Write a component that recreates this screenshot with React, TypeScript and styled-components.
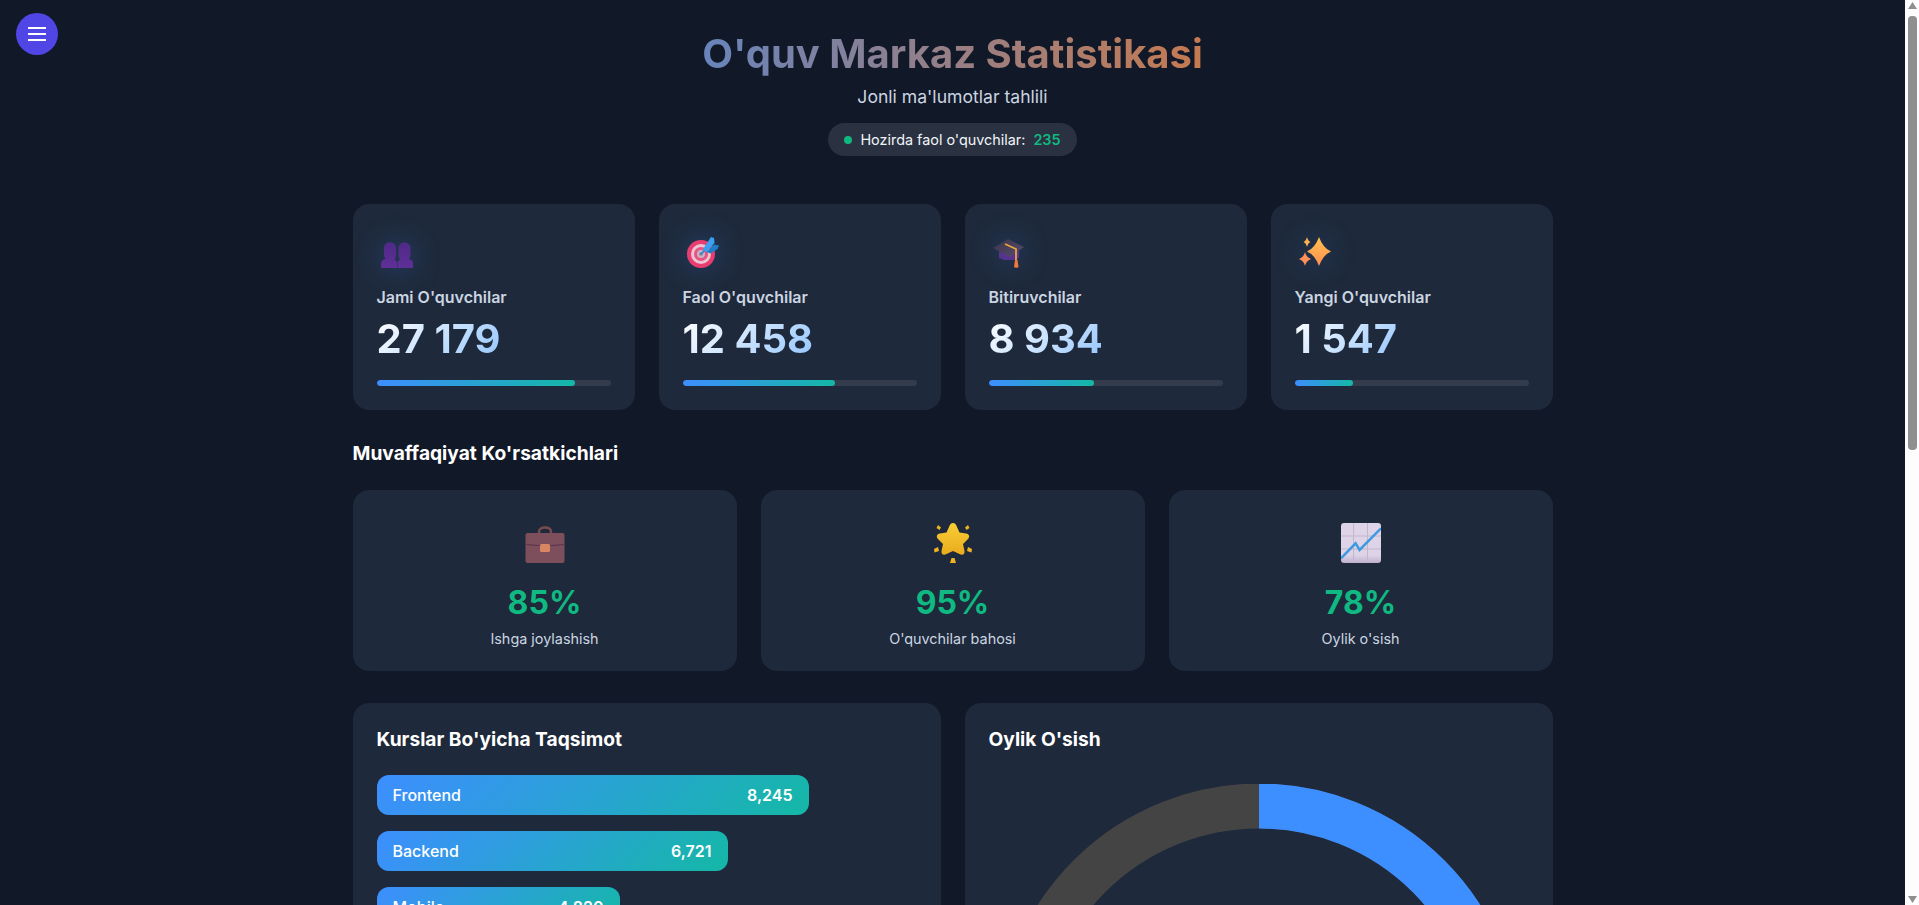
import React from "react";
import styled, { createGlobalStyle } from "styled-components";

const GlobalStyle = createGlobalStyle`
  html {
    background: #111827;
  }
  body {
    margin: 0;
    background: #111827;
    color: #ffffff;
    font-family: "Inter", "Noto Sans", sans-serif;
  }
`;

const ScrollTrack = styled.div`
  position: fixed;
  top: 0;
  right: 0;
  bottom: 0;
  width: 14px;
  background: #fdfdfd;
  display: flex;
  flex-direction: column;
  justify-content: space-between;
`;

const ScrollArrow = styled.svg`
  display: block;
  width: 9px;
  height: 7px;
  margin: 2px 2px 2px 3px;
`;

const ScrollThumb = styled.div`
  position: absolute;
  top: 16px;
  left: 3px;
  width: 9px;
  height: 434px;
  border-radius: 4px;
  background: #8f8f8f;
`;

const MenuButton = styled.button`
  position: fixed;
  top: 13px;
  left: 16px;
  width: 42px;
  height: 42px;
  padding: 0;
  border: none;
  border-radius: 50%;
  background: #4f46e5;
  display: flex;
  flex-direction: column;
  align-items: center;
  justify-content: center;
  gap: 4px;
`;

const MenuLine = styled.span`
  display: block;
  width: 18px;
  height: 2px;
  background: #ffffff;
`;

const Page = styled.div`
  min-height: 1824px;
  padding-right: 14px;
`;

const Container = styled.main`
  width: 1200px;
  margin: 0 auto;
`;

const Header = styled.header`
  padding-top: 30px;
  display: flex;
  flex-direction: column;
  align-items: center;
  margin-bottom: 48px;
`;

const Title = styled.h1`
  margin: 0;
  font-size: 40px;
  line-height: 48px;
  font-weight: 700;
  background: linear-gradient(90deg, #6884bb, #c67a50);
  -webkit-background-clip: text;
  background-clip: text;
  color: transparent;
`;

const Subtitle = styled.p`
  margin: 8px 0 0;
  font-size: 17.6px;
  line-height: 21px;
  color: #cbd5e1;
`;

const LiveBadge = styled.div`
  margin-top: 16px;
  height: 33px;
  padding: 0 16px;
  border-radius: 17px;
  background: #2a3140;
  display: flex;
  align-items: center;
  font-size: 14.4px;
  color: #f1f5f9;
`;

const LiveDot = styled.span`
  width: 8px;
  height: 8px;
  border-radius: 50%;
  background: #10b981;
  margin-right: 8px;
`;

const LiveCount = styled.span`
  margin-left: 8px;
  color: #10b981;
  font-weight: 600;
`;

const StatGrid = styled.section`
  display: grid;
  grid-template-columns: repeat(4, 1fr);
  gap: 24px;
`;

const Card = styled.div`
  background: #1e293b;
  border-radius: 16px;
  padding: 24px;
`;

const StatIcon = styled.div`
  height: 48px;
  display: flex;
  align-items: center;
  padding-left: 4px;
  margin-bottom: 12px;

  svg {
    filter: drop-shadow(0 0 14px rgba(61, 142, 255, 0.3));
  }
`;

const StatLabel = styled.div`
  font-size: 16px;
  line-height: 18px;
  font-weight: 600;
  color: #cbd5e1;
`;

const StatValue = styled.div`
  margin-top: 9px;
  font-size: 40px;
  line-height: 48px;
  font-weight: 700;
  width: fit-content;
  background: linear-gradient(135deg, #ffffff, #93c5fd);
  -webkit-background-clip: text;
  background-clip: text;
  color: transparent;
`;

const Progress = styled.div`
  margin-top: 17px;
  height: 6px;
  border-radius: 3px;
  background: #323c4c;
  overflow: hidden;
`;

const ProgressFill = styled.div<{ $width: number }>`
  width: ${p => p.$width}%;
  height: 100%;
  border-radius: 3px;
  background: linear-gradient(90deg, #3d8eff, #14b8a6);
`;

const SectionTitle = styled.h2`
  margin: 31px 0 25px;
  font-size: 19.2px;
  line-height: 24px;
  font-weight: 700;
  color: #ffffff;
`;

const SuccessGrid = styled.section`
  display: grid;
  grid-template-columns: repeat(3, 1fr);
  gap: 24px;
`;

const SuccessCard = styled(Card)`
  padding: 33px 24px 22px;
  display: flex;
  flex-direction: column;
  align-items: center;
`;

const SuccessValue = styled.div`
  margin-top: 21px;
  font-size: 32px;
  line-height: 38px;
  font-weight: 700;
  color: #10b981;
`;

const SuccessLabel = styled.div`
  margin-top: 7px;
  font-size: 14.4px;
  line-height: 20px;
  color: #cbd5e1;
`;

const ChartGrid = styled.section`
  margin-top: 32px;
  display: grid;
  grid-template-columns: repeat(2, 1fr);
  gap: 24px;
`;

const ChartTitle = styled.h3`
  margin: 0 0 24px;
  font-size: 19.2px;
  line-height: 24px;
  font-weight: 700;
  color: #ffffff;
`;

const CourseList = styled.div`
  display: flex;
  flex-direction: column;
  gap: 16px;
`;

const CourseBar = styled.div<{ $width: number }>`
  width: ${p => p.$width}%;
  height: 40px;
  box-sizing: border-box;
  padding: 0 16px;
  border-radius: 12px;
  background: linear-gradient(135deg, #3d8eff, #14b8a6);
  display: flex;
  align-items: center;
  justify-content: space-between;
  font-size: 16px;
  font-weight: 500;
  color: #ffffff;
`;

const CourseCount = styled.span`
  font-weight: 600;
`;

const DonutSvg = styled.svg`
  display: block;
  width: 540px;
  height: 540px;
  margin-top: 33px;
`;

const Busts = () => (
  <svg width="32" height="32" viewBox="0 0 32 32">
    <defs>
      <linearGradient id="bust" x1="0" y1="0" x2="0" y2="1">
        <stop offset="0" stopColor="#4f2a86" />
        <stop offset="1" stopColor="#5f2f98" />
      </linearGradient>
    </defs>
    <path d="M17.500 12c0-3.500 2.500-5.500 6-5.500s6 2 6 5.500v6c0 2-.5 3.500-1.500 5 2.500.5 4 2 4 4.500V32H16.500v-5c0-1.500 1-2.800 2.500-3.500-1-1.500-1.500-3.500-1.500-5.500z" fill="url(#bust)" />
    <path d="M3 12c0-3.500 2.500-5.500 6-5.500s6 2 6 5.500v6c0 2-.5 4-1.500 5.500 1.500.7 2.500 2 2.500 3.500v5H0v-4.500C0 25 1.500 23.500 4.500 23 3.500 21.500 3 20 3 18z" fill="url(#bust)" />
  </svg>
);

const Target = () => (
  <svg width="32" height="32" viewBox="0 0 32 32">
    <circle cx="14" cy="18" r="14" fill="#ea3d6f" />
    <circle cx="14" cy="18" r="10" fill="#e8c6d6" />
    <circle cx="14" cy="18" r="7" fill="#e8537f" />
    <circle cx="14" cy="18" r="4" fill="#c8b4c4" />
    <circle cx="14" cy="18" r="1.800" fill="#8d7a92" />
    <path d="M14 18 24 8" stroke="#2f8fdc" strokeWidth="2" />
    <path d="M16 13 24 1l3 1 .5 5-8 9z" fill="#38a2f0" />
    <path d="M19.500 16 27 8.500l5 1-1.500 3.500-7 4.500z" fill="#1f7cc8" />
  </svg>
);

const GradCap = () => (
  <svg width="32" height="32" viewBox="0 0 32 32">
    <defs>
      <linearGradient id="cap" x1="0" y1="0" x2="1" y2="1">
        <stop offset="0" stopColor="#3a3448" />
        <stop offset="1" stopColor="#574c70" />
      </linearGradient>
    </defs>
    <path d="M6 15v7l5 2h10l5-2v-7z" fill="#55338f" />
    <path d="M0 12 15 3l16 8-14 10z" fill="url(#cap)" />
    <path d="M12 8l11 5v11" fill="none" stroke="#eaa63e" strokeWidth="1.800" />
    <path d="M22 24h2.500l1 7c-.5 1-3.500 1-4.500 0z" fill="#f0783c" />
  </svg>
);

const Sparkles = () => (
  <svg width="32" height="32" viewBox="0 0 32 32">
    <defs>
      <linearGradient id="spark" x1="0" y1="0" x2="0" y2="1">
        <stop offset="0" stopColor="#ffc24e" />
        <stop offset="1" stopColor="#ff8f52" />
      </linearGradient>
    </defs>
    <path d="M20 1Q24 12 32 15.500 24 19 20 30 16 19 8 15.500 16 12 20 1z" fill="url(#spark)" />
    <path d="M8 1Q9 5 11.500 6 9 7 8 11 7 7 4.500 6 7 5 8 1z" fill="#ffb050" />
    <path d="M6 16Q7 21 12 23 7 25 6 30 5 25 0 23 5 21 6 16z" fill="#ff9058" />
  </svg>
);

const Briefcase = () => (
  <svg width="40" height="40" viewBox="0 0 40 40">
    <path d="M14 11V9c0-3 2.500-4.500 6-4.500S26 6 26 9v2" fill="none" stroke="#794b4f" strokeWidth="2.400" />
    <rect x="0.500" y="10" width="39" height="30" rx="2" fill="#7d4e5c" />
    <path d="M0.500 21c6 2 33 2 39 0" fill="none" stroke="#5e3550" strokeWidth="1.200" />
    <rect x="15" y="21" width="10" height="8" rx="1.500" fill="#d98663" />
  </svg>
);

const StarBurst = () => (
  <svg width="40" height="40" viewBox="0 0 40 40">
    <defs>
      <linearGradient id="star" x1="0" y1="0" x2="0" y2="1">
        <stop offset="0" stopColor="#f8ce34" />
        <stop offset="1" stopColor="#eaab1e" />
      </linearGradient>
    </defs>
    <path d="M20 0c2 0 3 1.500 4 4l2.500 5.500 6.500 1c3.500.5 4 3.500 2 5.500l-5 5 1.500 7c.5 3.500-2 4.500-5 3l-6.500-3-6.500 3c-3 1.500-5.500.5-5-3l1.500-7-5-5c-2-2-1.500-5 2-5.500l6.500-1L16 4c1-2.500 2-4 4-4z" fill="url(#star)" />
    <path d="M5 2l3 2.500-1.500 2.500L3.500 5zM35 2l-3 2.500 1.500 2.500L36.500 5zM1 26l4-2 1 4-4.500 1.500zM39 26l-4-2-1 4 4.500 1.500zM18.500 35h3l1.500 5h-6z" fill="#eeb31f" />
  </svg>
);

const GrowthChart = () => (
  <svg width="40" height="40" viewBox="0 0 40 40">
    <defs>
      <linearGradient id="sheet" x1="0" y1="0" x2="0" y2="1">
        <stop offset="0.800" stopColor="#ded4e7" />
        <stop offset="1" stopColor="#bfb0cf" />
      </linearGradient>
    </defs>
    <rect width="40" height="40" rx="3" fill="url(#sheet)" />
    <path d="M12.600 0v40M26.500 0v40M0 13h40M0 26h40" stroke="#c2b6cd" strokeWidth="1" />
    <path d="M0 35.300 14.600 20.300l4 6.700L40 5.300" fill="none" stroke="#3d9ae0" strokeWidth="2.500" />
  </svg>
);

const stats = [
  { label: "Jami O'quvchilar", value: "27 179", width: 85, icon: <Busts /> },
  { label: "Faol O'quvchilar", value: "12 458", width: 65, icon: <Target /> },
  { label: "Bitiruvchilar", value: "8 934", width: 45, icon: <GradCap /> },
  { label: "Yangi O'quvchilar", value: "1 547", width: 25, icon: <Sparkles /> }
];

const success = [
  { label: "Ishga joylashish", value: "85%", icon: <Briefcase /> },
  { label: "O'quvchilar bahosi", value: "95%", icon: <StarBurst /> },
  { label: "Oylik o'sish", value: "78%", icon: <GrowthChart /> }
];

const courses = [
  { name: "Frontend", count: "8,245", width: 80 },
  { name: "Backend", count: "6,721", width: 65 },
  { name: "Mobile", count: "4,820", width: 45 }
];

const Donut = () => {
  const radius = 240;
  const length = 2 * Math.PI * radius;
  return (
    <DonutSvg viewBox="0 0 540 540">
      <g transform="rotate(-90 270 262)" fill="none" strokeWidth="45">
        <circle cx="270" cy="262" r={radius} stroke="#444444" />
        <circle
          cx="270"
          cy="262"
          r={radius}
          stroke="#3d8eff"
          strokeDasharray={`${length * 0.75} ${length}`}
        />
      </g>
    </DonutSvg>
  );
};

const App = () => (
  <Page>
    <GlobalStyle />
    <MenuButton aria-label="Menu">
      <MenuLine />
      <MenuLine />
      <MenuLine />
    </MenuButton>
    <Container>
      <Header>
        <Title>O'quv Markaz Statistikasi</Title>
        <Subtitle>Jonli ma'lumotlar tahlili</Subtitle>
        <LiveBadge>
          <LiveDot />
          Hozirda faol o'quvchilar:
          <LiveCount>235</LiveCount>
        </LiveBadge>
      </Header>
      <StatGrid>
        {stats.map(stat => (
          <Card key={stat.label}>
            <StatIcon>{stat.icon}</StatIcon>
            <StatLabel>{stat.label}</StatLabel>
            <StatValue>{stat.value}</StatValue>
            <Progress>
              <ProgressFill $width={stat.width} />
            </Progress>
          </Card>
        ))}
      </StatGrid>
      <SectionTitle>Muvaffaqiyat Ko'rsatkichlari</SectionTitle>
      <SuccessGrid>
        {success.map(item => (
          <SuccessCard key={item.label}>
            {item.icon}
            <SuccessValue>{item.value}</SuccessValue>
            <SuccessLabel>{item.label}</SuccessLabel>
          </SuccessCard>
        ))}
      </SuccessGrid>
      <ChartGrid>
        <Card>
          <ChartTitle>Kurslar Bo'yicha Taqsimot</ChartTitle>
          <CourseList>
            {courses.map(course => (
              <CourseBar key={course.name} $width={course.width}>
                <span>{course.name}</span>
                <CourseCount>{course.count}</CourseCount>
              </CourseBar>
            ))}
          </CourseList>
        </Card>
        <Card>
          <ChartTitle>Oylik O'sish</ChartTitle>
          <Donut />
        </Card>
      </ChartGrid>
    </Container>
    <ScrollTrack aria-hidden="true">
      <ScrollArrow viewBox="0 0 9 7">
        <polygon points="4.500,0 9,7 0,7" fill="#8f8f8f" />
      </ScrollArrow>
      <ScrollThumb />
      <ScrollArrow viewBox="0 0 9 7">
        <polygon points="0,0 9,0 4.500,7" fill="#8f8f8f" />
      </ScrollArrow>
    </ScrollTrack>
  </Page>
);

export default App;
